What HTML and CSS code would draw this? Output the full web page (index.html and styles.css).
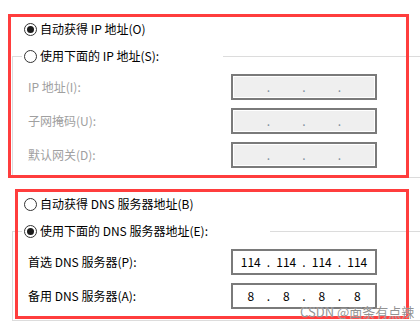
FILE: index.html
```html
<!DOCTYPE html>
<html lang="zh-CN">
<head>
<meta charset="utf-8">
<link rel="stylesheet" href="styles.css">
</head>
<body>
<div class="page">
  <label class="radio-row first">
    <span class="radio checked"></span><span>自动获得 IP 地址(O)</span>
  </label>
  <fieldset class="group g1">
    <legend class="legend l1"><span class="radio"></span><span>使用下面的 IP 地址(S):</span></legend>
    <div class="fields">
      <div class="row"><span class="lbl disabled">IP 地址(I):</span><div class="ip off"><span></span><i>.</i><span></span><i>.</i><span></span><i>.</i><span></span></div></div>
      <div class="row"><span class="lbl disabled">子网掩码(U):</span><div class="ip off"><span></span><i>.</i><span></span><i>.</i><span></span><i>.</i><span></span></div></div>
      <div class="row"><span class="lbl disabled">默认网关(D):</span><div class="ip off"><span></span><i>.</i><span></span><i>.</i><span></span><i>.</i><span></span></div></div>
    </div>
  </fieldset>
  <label class="radio-row second">
    <span class="radio"></span><span>自动获得 DNS 服务器地址(B)</span>
  </label>
  <fieldset class="group g2">
    <legend class="legend l2"><span class="radio checked"></span><span>使用下面的 DNS 服务器地址(E):</span></legend>
    <div class="fields f2">
      <div class="row"><span class="lbl">首选 DNS 服务器(P):</span><div class="ip"><span>114</span><i>.</i><span>114</span><i>.</i><span>114</span><i>.</i><span>114</span></div></div>
      <div class="row"><span class="lbl">备用 DNS 服务器(A):</span><div class="ip"><span>8</span><i>.</i><span>8</span><i>.</i><span>8</span><i>.</i><span>8</span></div></div>
    </div>
  </fieldset>
  <div class="mark mark1"></div>
  <div class="mark mark2"></div>
  <div class="watermark">CSDN @面条有点辣</div>
</div>
</body>
</html>
```
FILE: styles.css
```css
html, body {
  margin: 0;
  padding: 0;
  background: #fff;
}
body {
  width: 420px;
  height: 325px;
  overflow: hidden;
  font-family: "Noto Sans CJK SC", "Microsoft YaHei", sans-serif;
  font-size: 12px;
  color: #000;
}
.page {
  position: relative;
  width: 420px;
  height: 325px;
  overflow: hidden;
  padding: 21px 0 0 12px;
  box-sizing: border-box;
}
.radio-row {
  display: flex;
  align-items: center;
  height: 16px;
  line-height: 16px;
  margin-left: 12px;
  gap: 3px;
}
.radio-row.second {
  margin-top: 18px;
}
.radio {
  width: 13px;
  height: 13px;
  box-sizing: border-box;
  border: 1px solid #333;
  border-radius: 50%;
  background: #fff;
  display: inline-flex;
  align-items: center;
  justify-content: center;
  flex: none;
}
.radio.checked::after {
  content: "";
  width: 7px;
  height: 7px;
  border-radius: 50%;
  background: #1b1b1b;
}
.group {
  margin: 11px 0 0 0;
  padding: 0;
  min-width: 0;
  width: 408px;
  box-sizing: border-box;
  border: 1px solid #dcdcdc;
  border-right: none;
}
.legend {
  display: flex;
  align-items: center;
  gap: 3px;
  height: 16px;
  line-height: 16px;
  margin-left: 9px;
  padding: 0 0 0 2px;
  box-sizing: border-box;
}
.l1 { width: 201px; }
.l2 { width: 248px; }
.fields {
  display: flex;
  flex-direction: column;
  gap: 8px;
  padding: 10px 0 9px 15px;
}
.fields.f2 {
  padding-bottom: 11px;
}
.row {
  display: flex;
  align-items: center;
  height: 26px;
}
.lbl {
  width: 203px;
  flex: none;
  line-height: 16px;
}
.lbl.disabled {
  color: #a0a0a0;
}
.ip {
  width: 146px;
  height: 26px;
  box-sizing: border-box;
  border: 2px solid #7a7a7a;
  background: #fff;
  display: grid;
  grid-template-columns: 1fr auto 1fr auto 1fr auto 1fr;
  align-items: center;
  padding: 0 1px;
  line-height: 14px;
  font-family: "Noto Sans CJK SC", sans-serif;
  font-size: 12px;
}
.ip span {
  text-align: center;
}
.ip i {
  font-style: normal;
  width: 2px;
  display: flex;
  justify-content: center;
}
.ip.off {
  background: #efefef;
  box-shadow: inset 0 0 0 1px #fff;
  color: #7f8fa0;
}
.mark {
  position: absolute;
  border: 3px solid #ff3d3d;
  box-sizing: border-box;
  pointer-events: none;
}
.mark1 {
  left: 8px;
  top: 14px;
  width: 401px;
  height: 164px;
}
.mark2 {
  left: 15px;
  top: 189px;
  width: 394px;
  height: 130px;
}
.watermark {
  position: absolute;
  left: 300px;
  top: 305px;
  font-size: 13px;
  line-height: 13px;
  color: rgba(110, 110, 110, 0.75);
  text-shadow: 0 0 1px #fff;
  white-space: nowrap;
}
```
